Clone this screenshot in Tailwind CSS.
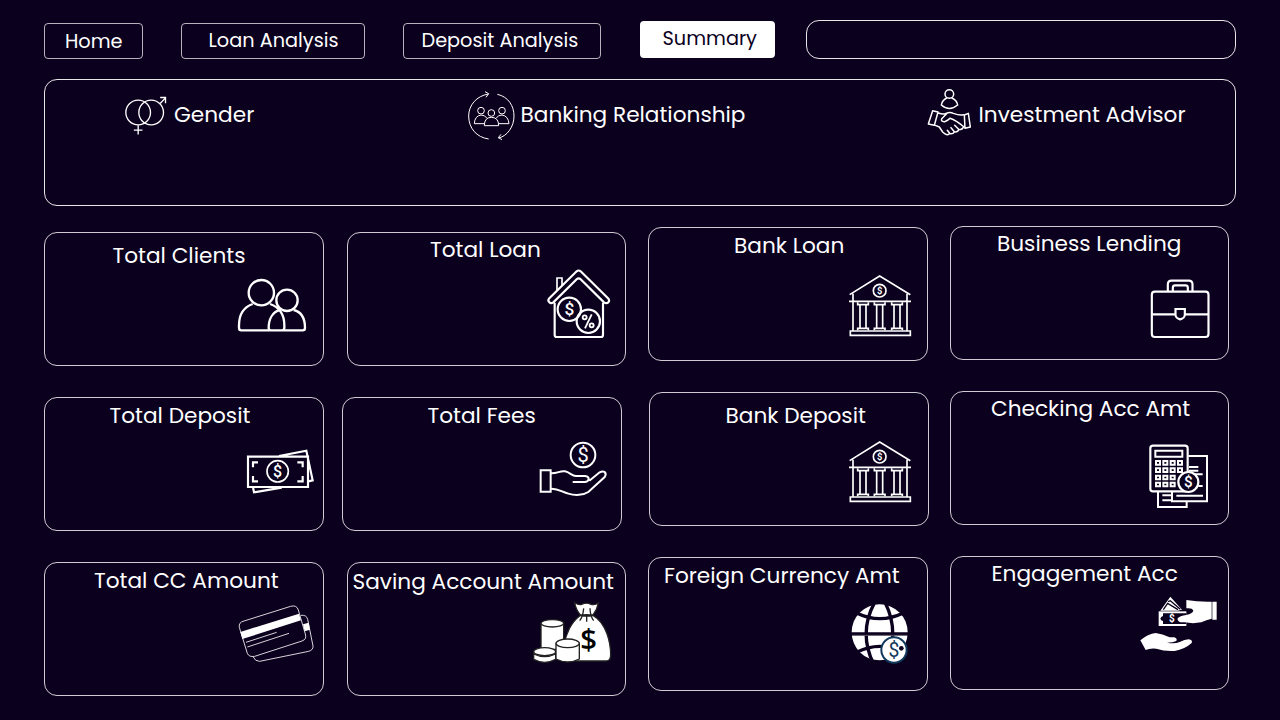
<!DOCTYPE html>
<html lang="en">
<head>
<meta charset="utf-8">
<title>Summary</title>
<script src="https://cdn.jsdelivr.net/npm/@tailwindcss/browser@4"></script>
</head>
<body class="bg-[#0b001e]">
<div class="w-[1280px] h-[720px] overflow-hidden bg-[#0b001e] text-white font-['Poppins','Inter',sans-serif] text-[21.65px] leading-6 whitespace-nowrap">
  <header class="flex items-start h-[79px] pt-5 pl-11 text-[19.3px]">
    <a class="mt-[3px] w-[99px] h-9 rounded border border-white/70 pl-[20px] pt-[6px]">Home</a>
    <a class="mt-[3px] ml-[38px] w-[184px] h-9 rounded border border-white/70 pl-[26.5px] pt-[5px]">Loan Analysis</a>
    <a class="mt-[3px] ml-[38px] w-[198px] h-9 rounded border border-white/70 pl-[17.5px] pt-[5px]">Deposit Analysis</a>
    <a class="mt-px ml-[39px] w-[135px] h-[37px] rounded bg-white text-[#0b001e] pl-[22.5px] pt-[6px]">Summary</a>
    <div class="ml-[31px] w-[430px] h-[39px] rounded-[13px] border border-white/90"></div>
  </header>

  <section class="ml-11 w-[1192px] h-[127px] rounded-[13px] border border-white/90 flex items-start">
    <svg class="ml-[79px] mt-[16px]" width="43" height="40" viewBox="281.5 258.5 129 120" fill="none" stroke="#fff" stroke-width="4"><circle cx="324" cy="308" r="37"/><circle cx="363" cy="308" r="37"/><path d="M390 281L406 264M390 263H406V280M324 346V374M311 361H337"/></svg>
    <span class="ml-[7px] mt-[23px] w-[80px]">Gender</span>
    <svg class="ml-[212px] mt-[10px]" width="50" height="51" viewBox="108 240 150 153" fill="none" stroke="#fff" stroke-width="3"><path d="M175 252C140 258 116 285 116 318C116 355 140 382 176 387M202 253C235 260 252 288 252 318C252 350 232 378 206 384M165 245L176 251L168 262M213 373L205 383L216 389"/><circle cx="153" cy="302" r="10"/><circle cx="216" cy="302" r="10"/><circle cx="184" cy="309" r="10"/><path d="M170 324Q165 315 153 315Q134 318 133 341H162M199 324Q204 315 216 315Q235 318 237 341H207M163 347Q163 322 184 322Q206 322 206 347Z"/></svg>
    <span class="ml-[4.5px] mt-[23px] w-[226px]">Banking Relationship</span>
    <svg class="ml-[180.5px] mt-[8px]" width="45" height="48" viewBox="81 233 135 144" fill="none" stroke="#fff" stroke-width="4.5" stroke-linejoin="round" stroke-linecap="round"><circle cx="148" cy="251" r="13"/><path d="M140 263Q126 270 124 284Q148 305 173 284Q171 270 156 263M98 301L114 305L103 345L85 341ZM193 314L205 309L211 350L195 354ZM115 308Q130 314 138 309Q150 304 160 309Q180 316 190 313M140 310L125 325Q122 335 134 334Q144 331 150 324Q168 330 192 350M106 345L118 350L128 365Q140 378 148 370Q160 372 163 365Q174 366 176 358Q188 358 190 350M142 360L149 369M153 352L163 364M164 345L176 357"/></svg>
    <span class="ml-[6.5px] mt-[23px]">Investment Advisor</span>
  </section>

  <main class="flex items-start pl-11">
    <div class="mt-[26px] w-[280px] flex flex-col gap-[31px]">
      <article class="h-[134px] rounded-[13px] border border-white/80">
        <h2 class="ml-[67.5px] mt-[11px] h-6">Total Clients</h2>
        <svg class="ml-[191px] mt-[10px]" width="72" height="56" viewBox="49 54 216 168" fill="none" stroke="#fff" stroke-width="7"><circle cx="125" cy="98" r="38"/><circle cx="202" cy="121" r="32"/><path d="M99 132C70 142 58 168 58 196V204q0 7 7 7H187q7 0 7-7V196C194 165 180 142 151 132M181 150C158 156 147 178 147 204q0 7 7 7H249q7 0 7-7C256 176 246 156 222 150"/></svg>
      </article>
      <article class="h-[134px] rounded-[13px] border border-white/80">
        <h2 class="ml-[64.5px] mt-[6px] h-6">Total Deposit</h2>
        <svg class="ml-[200px] mt-[20px]" width="70" height="46" viewBox="30 54 210 138" fill="none" stroke="#fff" stroke-width="6.5"><path d="M39 80H219V171H39ZM132 78L214 62L233 151L220 154M54 172L57 187L140 173"/><circle cx="128" cy="124" r="32" stroke-width="5"/><path d="M54 112V97H69M187 97H203V112M54 138V154H69M187 154H203V138"/><text class="font-['Roboto']" x="128" y="141" text-anchor="middle" font-size="48" font-weight="500" fill="#fff" stroke="none">$</text></svg>
      </article>
      <article class="h-[134px] rounded-[13px] border border-white/80">
        <h2 class="ml-[49px] mt-[6px] h-6">Total CC Amount</h2>
        <svg class="ml-[192px] mt-[11px]" width="78" height="59" viewBox="37 42 234 177" fill="none" stroke="#fff" stroke-width="2.5"><path d="M58 93L198 49Q216 44 221 60L242 132Q247 148 232 153L90 199Q73 202 68 190L44 112Q41 97 58 93ZM64 157L156 127M68 171L193 130M228 76Q246 74 249 88L265 168Q266 180 252 184L105 214Q92 215 85 200"/><path fill="#fff" stroke="none" d="M47 126L223 71L229 91L53 147ZM235 103L252 98L256 119L240 124Z"/></svg>
      </article>
    </div>

    <div class="mt-[26px] ml-[18px] w-[284px] flex flex-col gap-[31px]">
      <article class="ml-[5px] w-[279px] h-[134px] rounded-[13px] border border-white/80">
        <h2 class="ml-[82px] mt-[5px] h-6">Total Loan</h2>
        <svg class="ml-[198px] mt-[6px]" width="66" height="72" viewBox="48 24 198 216" fill="none" stroke="#fff" stroke-width="6.5"><path d="M140 34Q146 29 152 34L234 115Q240 121 235 127Q229 132 222 127L152 58Q146 52 140 58L70 127Q63 132 58 127Q52 121 58 115ZM74 128V225Q74 231 80 231H213Q219 231 219 225V128"/><path stroke-width="5" d="M81 92V54H96V76"/><circle cx="118" cy="148" r="35"/><circle cx="175" cy="184" r="35"/><text class="font-['Roboto']" x="118" y="166" text-anchor="middle" font-size="52" font-weight="500" fill="#fff" stroke="none">$</text><g stroke-width="5.5"><circle cx="164" cy="172" r="6"/><circle cx="185" cy="196" r="6"/><path d="M185 163L165 205"/></g></svg>
      </article>
      <article class="w-[280px] h-[134px] rounded-[13px] border border-white/80">
        <h2 class="ml-[84.5px] mt-[6px] h-6">Total Fees</h2>
        <svg class="ml-[195px] mt-[12px]" width="71" height="57" viewBox="24 30 213 171" fill="none" stroke="#fff" stroke-width="6"><circle cx="159" cy="75" r="37"/><text class="font-['Roboto']" x="159" y="96" text-anchor="middle" font-size="60" font-weight="400" fill="#fff" stroke="none">$</text><path d="M32 121H62V185H32ZM65 130C85 130 88 122 105 124C120 127 125 138 138 138H165Q177 140 176 148Q174 156 164 156H128M65 176C85 176 95 185 115 191C135 197 160 196 175 186L224 141Q230 132 224 126Q218 122 209 127L178 152"/></svg>
      </article>
      <article class="ml-[5px] w-[279px] h-[134px] rounded-[13px] border border-white/80">
        <h2 class="ml-[4.5px] mt-[7px] h-6">Saving Account Amount</h2>
        <svg class="ml-[184px] mt-[7px]" width="81" height="63" viewBox="921 33 243 189" fill="#fff" stroke="#222" stroke-width="4"><path d="M1065 77C1040 95 1022 130 1018 165V213H1145Q1157 212 1157 195C1157 160 1145 100 1105 77ZM1049 38Q1062 46 1070 43Q1085 36 1098 43Q1110 46 1120 39Q1116 60 1104 75Q1085 82 1066 75Q1052 58 1049 38Z"/><path fill="none" d="M1063 76Q1085 72 1107 76M1076 55Q1074 80 1064 92M1085 76V95M1095 55Q1096 80 1106 92"/><text class="font-['Open_Sans']" x="1091" y="180" text-anchor="middle" font-size="88" font-weight="600" fill="#000" stroke="none">$</text><path d="M948 100V178H1016V100"/><ellipse cx="982" cy="100" rx="34" ry="11"/><path d="M926 185V208Q959 226 992 208V185"/><ellipse cx="959" cy="185" rx="33" ry="12"/><path fill="none" d="M926 192Q959 208 992 192"/><path d="M993 160V207Q1028 225 1063 207V160"/><ellipse cx="1028" cy="160" rx="35" ry="13"/></svg>
      </article>
    </div>

    <div class="mt-[21px] ml-[22px] w-[281px] flex flex-col gap-[31px]">
      <article class="w-[280px] h-[134px] rounded-[13px] border border-white/80">
        <h2 class="ml-[85px] mt-[6px] h-6">Bank Loan</h2>
        <svg class="ml-[198px] mt-[16px]" width="66" height="64" viewBox="36 42 198 192" fill="none" stroke="#fff" stroke-width="5"><path d="M44 104L134 48L226 104M42 124H228M54 101V212M216 101V212M46 213H226V226H46Z"/><circle cx="134" cy="92" r="19"/><text class="font-['Roboto']" x="134" y="102" text-anchor="middle" font-size="28" font-weight="700" fill="#fff" stroke="none">$</text><path d="M68 127V134H100V127M75 134V205M93 134V205M68 211V205H100V211M118 127V134H150V127M125 134V205M143 134V205M118 211V205H150V211M170 127V134H202V127M177 134V205M195 134V205M170 211V205H202V211"/></svg>
      </article>
      <article class="ml-px w-[280px] h-[134px] rounded-[13px] border border-white/80">
        <h2 class="ml-[75.5px] mt-[11px] h-6">Bank Deposit</h2>
        <svg class="ml-[197px] mt-[12px]" width="66" height="64" viewBox="36 42 198 192" fill="none" stroke="#fff" stroke-width="5"><path d="M44 104L134 48L226 104M42 124H228M54 101V212M216 101V212M46 213H226V226H46Z"/><circle cx="134" cy="92" r="19"/><text class="font-['Roboto']" x="134" y="102" text-anchor="middle" font-size="28" font-weight="700" fill="#fff" stroke="none">$</text><path d="M68 127V134H100V127M75 134V205M93 134V205M68 211V205H100V211M118 127V134H150V127M125 134V205M143 134V205M118 211V205H150V211M170 127V134H202V127M177 134V205M195 134V205M170 211V205H202V211"/></svg>
      </article>
      <article class="w-[280px] h-[134px] rounded-[13px] border border-white/80">
        <h2 class="ml-[15px] mt-[6px] h-6">Foreign Currency Amt</h2>
        <svg class="ml-[201px] mt-[14px]" width="60" height="64" viewBox="30 51 180 192" fill="none" stroke="#0b001e" stroke-width="10"><circle cx="119" cy="142" r="84" fill="#fff" stroke="none"/><path d="M30 147H210M104 52Q55 142 100 235M135 52Q180 142 138 235M50 84Q119 118 190 84M50 202Q119 166 190 202"/><path stroke="#aaa" stroke-width="1.5" d="M36 151H202"/><circle cx="162" cy="195" r="38" fill="#fff" stroke="#12395c" stroke-width="6"/><text class="font-['Roboto']" x="162" y="215" text-anchor="middle" font-size="58" font-weight="400" fill="#12395c" stroke="none">$</text><circle cx="184" cy="190" r="7" fill="#0b001e" stroke="none"/></svg>
      </article>
    </div>

    <div class="mt-[20px] ml-[21px] w-[279px] flex flex-col gap-[31px]">
      <article class="h-[134px] rounded-[13px] border border-white/80">
        <h2 class="ml-[46px] mt-[5px] h-6">Business Lending</h2>
        <svg class="ml-[198px] mt-[22px]" width="62" height="62" viewBox="42.5 39 186 186" fill="none" stroke="#fff" stroke-width="6.5"><rect x="51" y="80" width="170" height="136" rx="9"/><path d="M99 80V58Q99 47 110 47H162Q173 47 173 58V80M114 80V68Q114 61 121 61H152Q159 61 159 68V80M51 148H122M150 148H222M122 132H150V150Q149 160 136 163Q123 160 122 150Z"/></svg>
      </article>
      <article class="h-[134px] rounded-[13px] border border-white/80">
        <h2 class="ml-[40px] mt-[5px] h-6">Checking Acc Amt</h2>
        <svg class="ml-[197px] mt-[22px]" width="62" height="67" viewBox="39 39 186 201" fill="none" stroke="#fff" stroke-width="6.5"><rect x="46" y="47" width="112" height="137" rx="8"/><path stroke-width="6" d="M61 62H142V80H61ZM160 78H216V214H111V186M69 186V231H155V216M162 111H190M162 122H190M180 133H203M190 168H203M124 197H204M82 196H108M82 211H108"/><path stroke-width="6" d="M63 93h12v11h-12zM85 93h12v11h-12zM107 93h12v11h-12zM129 93h12v11h-12zM63 115h12v11h-12zM85 115h12v11h-12zM107 115h12v11h-12zM129 115h12v11h-12zM63 137h12v11h-12zM85 137h12v11h-12zM107 137h12v11h-12zM63 158h12v11h-12zM85 158h12v11h-12zM107 158h12v11h-12z"/><circle cx="160" cy="156" r="30" fill="#0b001e"/><text class="font-['Roboto']" x="160" y="172" text-anchor="middle" font-size="46" font-weight="500" fill="#fff" stroke="none">$</text></svg>
      </article>
      <article class="h-[134px] rounded-[13px] border border-white/80">
        <h2 class="ml-[40.5px] mt-[5px] h-6">Engagement Acc</h2>
        <svg class="ml-[188px] mt-[10px]" width="80" height="57" viewBox="898 33 240 171" fill="#fff"><path d="M962 77L992 35L1027 74L1020 76L1014 77Z"/><path d="M971 74L984 55L1015 74M985 50L992 47L1022 73" fill="none" stroke="#0b001e" stroke-width="4"/><path d="M957 79H1040V123H957Z"/><path fill="#0b001e" d="M970 85H1040V117H970V108Q963 106 962 101Q963 95 970 93Z"/><text class="font-['Roboto']" x="997" y="111" text-anchor="middle" font-size="30" font-weight="700">$</text><path d="M1040 45Q1075 51 1116 50V101Q1100 105 1085 112Q1060 117 1035 112H1022Q1012 108 1014 100Q1020 93 1040 90Q1058 86 1061 77Q1058 68 1040 70ZM1118 50H1131V104H1118Z"/><path d="M902 166Q925 146 948 144Q968 146 990 157H1004Q1014 161 1010 168Q1000 173 982 173Q1005 177 1020 171Q1035 163 1047 163Q1060 165 1056 174Q1035 193 1005 198Q975 200 950 191Q930 189 918 195Z"/></svg>
      </article>
    </div>
  </main>
</div>
</body>
</html>
